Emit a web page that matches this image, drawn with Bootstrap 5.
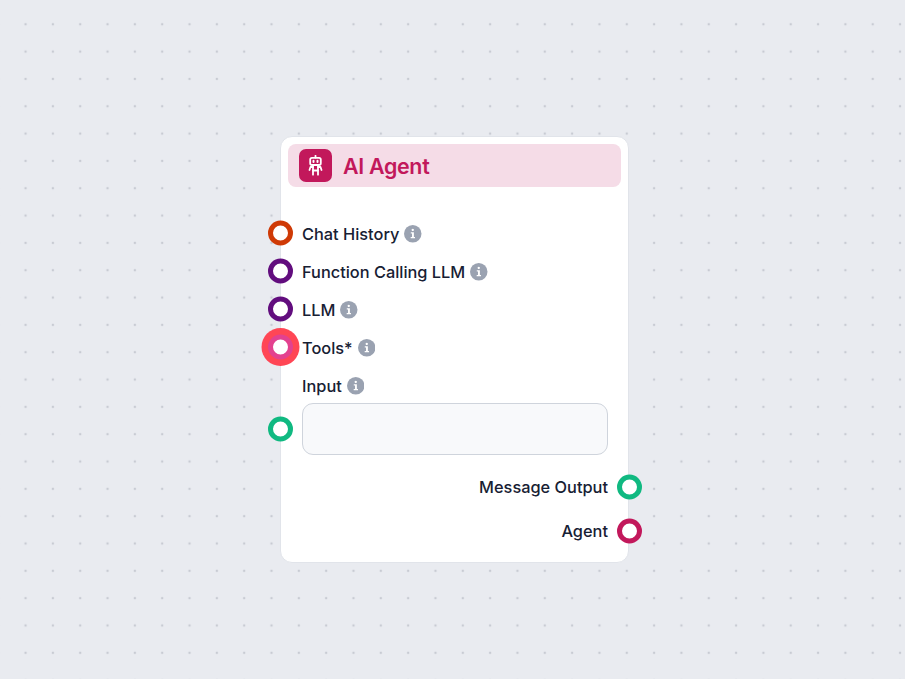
<!DOCTYPE html>
<html lang="en">
<head>
<meta charset="utf-8">
<title>AI Agent</title>
<link href="https://cdn.jsdelivr.net/npm/bootstrap@5.3.0/dist/css/bootstrap.min.css" rel="stylesheet">
<style>
html, body { height: 100%; }
body {
  font-family: Inter, "Liberation Sans", sans-serif;
  color: #172033;
  background-color: #e9ebf0;
  background-image: radial-gradient(circle, #c8cbd3 1.1px, transparent 1.6px);
  background-size: 27.33px 27.33px;
  background-position: 11.9px 10.6px;
  overflow: hidden;
}
.flow-node {
  position: absolute; left: 280px; top: 136px; width: 349px; height: 427px;
  background: #fff; border: 1px solid #e1e4ea; border-radius: 12px;
  padding: 7px;
}
.node-head {
  height: 43px; background: #f5dce7; border-radius: 8px;
  padding: 0 11px; gap: 11px; color: #c2185b;
}
.node-icon {
  width: 33px; height: 33px; background: #c2185b; border-radius: 7px;
}
.node-title { font-size: 21.400px; font-weight: 600; letter-spacing: -0.300px; line-height: 1; padding-top: 3px; }
.node-body { padding: 26.500px 13px 0 14px; }
.port-row { height: 38px; gap: 5px; font-size: 16.350px; font-weight: 500; position: relative; }
.port-text { line-height: 38px; padding-top: 3px; }
.info-dot { width: 17.500px; height: 17.500px; flex: none; display: block; margin-top: 3px; }
.port {
  position: absolute; width: 25px; height: 25px; border-radius: 50%;
  background: #fff; border: 5px solid; box-sizing: border-box; top: 50%; transform: translateY(-50%);
}
.port-left { left: -34.500px; }
.port-right { right: -34px; }
.c-orange { border-color: #cf3a06; }
.c-purple { border-color: #620d7e; }
.c-green { border-color: #10b981; }
.c-rose { border-color: #c2185b; }
.c-tools { border-color: #e3418f; box-shadow: 0 0 0 6.500px #ff4655; }
.input-wrap { position: relative; height: 52px; margin-top: -0.500px; }
.fake-input {
  display: block; width: 306px; height: 52px; background: #f8f9fb;
  border: 1px solid #cfd4dc; border-radius: 11px; padding: 6px 12px;
  font-size: 16px; box-shadow: none;
}
.out-row { justify-content: flex-end; height: 44px; font-size: 16.350px; font-weight: 500; position: relative; }
.out-first { margin-top: 10px; }
</style>
</head>
<body>
<div class="flow-node">
  <div class="node-head d-flex align-items-center">
    <div class="node-icon d-flex align-items-center justify-content-center">
      <svg width="21" height="21" viewBox="0 0 21 21" fill="none" stroke="#fff" stroke-width="1.800" stroke-linecap="round" stroke-linejoin="round">
        <path d="M10.500 .8v1.700"/>
        <rect x="5.200" y="2.800" width="10.600" height="7.200" rx="1.800"/>
        <path d="M8.500 5.700v1.200M12.500 5.700v1.200" stroke-width="2"/>
        <path d="M8 10v5.500h5V10"/>
        <path d="M8 12H5.500L4.500 15M13 12h2.500l1 3"/>
        <path d="M8 15.500v4.200M13 15.500v4.200"/>
      </svg>
    </div>
    <div class="node-title">AI Agent</div>
  </div>
  <div class="node-body">
    <div class="port-row d-flex align-items-center"><span class="port port-left c-orange"></span><span class="port-text">Chat History</span><svg class="info-dot" viewBox="0 0 17 17"><circle cx="8.500" cy="8.500" r="8.500" fill="#9aa2b1"/><path d="M8.500 3.600a1.150 1.150 0 1 0 .01 0zM6.600 7h3v4.600h1.100v1.300H6.500v-1.300h1.300V8.300H6.600z" fill="#fff"/></svg></div>
    <div class="port-row d-flex align-items-center"><span class="port port-left c-purple"></span><span class="port-text">Function Calling LLM</span><svg class="info-dot" viewBox="0 0 17 17"><circle cx="8.500" cy="8.500" r="8.500" fill="#9aa2b1"/><path d="M8.500 3.600a1.150 1.150 0 1 0 .01 0zM6.600 7h3v4.600h1.100v1.300H6.500v-1.300h1.300V8.300H6.600z" fill="#fff"/></svg></div>
    <div class="port-row d-flex align-items-center"><span class="port port-left c-purple"></span><span class="port-text">LLM</span><svg class="info-dot" viewBox="0 0 17 17"><circle cx="8.500" cy="8.500" r="8.500" fill="#9aa2b1"/><path d="M8.500 3.600a1.150 1.150 0 1 0 .01 0zM6.600 7h3v4.600h1.100v1.300H6.500v-1.300h1.300V8.300H6.600z" fill="#fff"/></svg></div>
    <div class="port-row d-flex align-items-center"><span class="port port-left c-tools"></span><span class="port-text">Tools*</span><svg class="info-dot" viewBox="0 0 17 17"><circle cx="8.500" cy="8.500" r="8.500" fill="#9aa2b1"/><path d="M8.500 3.600a1.150 1.150 0 1 0 .01 0zM6.600 7h3v4.600h1.100v1.300H6.500v-1.300h1.300V8.300H6.600z" fill="#fff"/></svg></div>
    <div class="port-row d-flex align-items-center"><span class="port-text">Input</span><svg class="info-dot" viewBox="0 0 17 17"><circle cx="8.500" cy="8.500" r="8.500" fill="#9aa2b1"/><path d="M8.500 3.600a1.150 1.150 0 1 0 .01 0zM6.600 7h3v4.600h1.100v1.300H6.500v-1.300h1.300V8.300H6.600z" fill="#fff"/></svg></div>
    <div class="input-wrap"><span class="port port-left c-green"></span><input class="form-control fake-input" type="text" aria-label="Input"></div>
    <div class="out-row out-first d-flex align-items-center"><span>Message Output</span><span class="port port-right c-green"></span></div>
    <div class="out-row d-flex align-items-center"><span>Agent</span><span class="port port-right c-rose"></span></div>
  </div>
</div>
<script src="https://cdn.jsdelivr.net/npm/bootstrap@5.3.0/dist/js/bootstrap.bundle.min.js"></script>
</body>
</html>
